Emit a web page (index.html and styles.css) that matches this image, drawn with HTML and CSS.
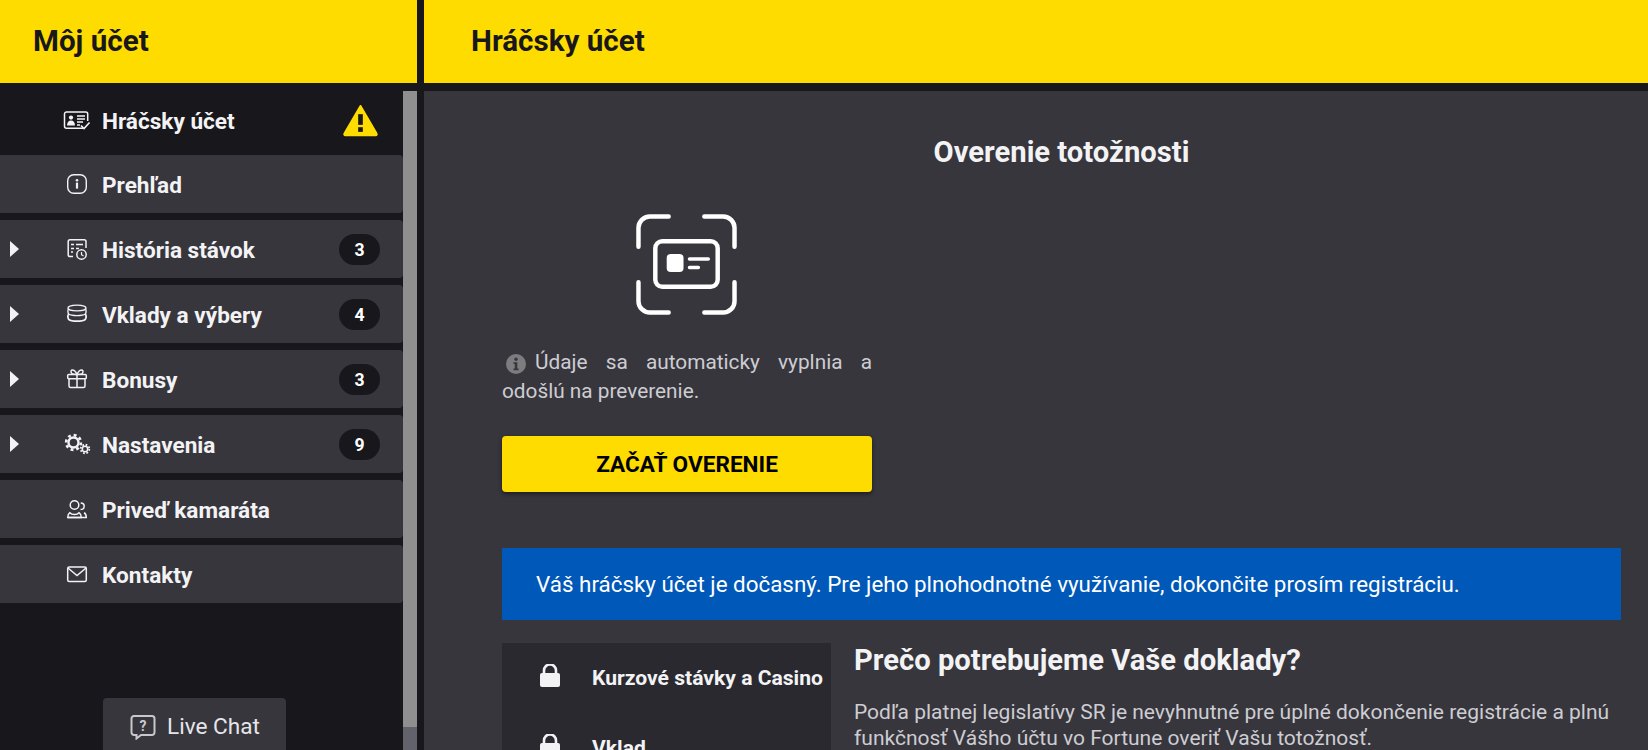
FILE: index.html
```html
<!DOCTYPE html>
<html lang="sk">
<head>
<meta charset="utf-8">
<title>Môj účet</title>
<link rel="stylesheet" href="styles.css">
</head>
<body>
<div class="app">
  <aside class="side">
    <header class="bar bar-left"><h1 class="bar-title">Môj účet</h1></header>
    <div class="side-body">
      <div class="side-main">
        <nav class="menu">
          <a class="item item-active">
            <span class="arrow-cell"></span>
            <svg class="ico" viewBox="0 0 28 24" fill="none" stroke="currentColor" stroke-width="1.5"><path d="M20 20.2H3.5a2 2 0 0 1-2-2V6a2 2 0 0 1 2-2h19.2a2 2 0 0 1 2 2v7"/><circle cx="8" cy="9.6" r="2.1" fill="currentColor" stroke="none"/><path d="M4 17.6c.2-3.6 1.6-5.2 4-5.2s3.800 1.600 4 5.200z" fill="currentColor" stroke="none"/><path d="M14 8h8M14 11h8M14 14h6M14 17h3"/><path d="M18 17.500l3 3 5.500-6" stroke-width="1.600"/></svg>
            <span class="label">Hráčsky účet</span>
            <svg class="warn" viewBox="0 0 36 34"><path d="M18 2.500 34.500 31a1 1 0 0 1-.9 1.600H2.400a1 1 0 0 1-.9-1.600z" fill="#ffdc00" stroke="#ffdc00" stroke-width="2" stroke-linejoin="round"/><rect x="15.600" y="11" width="4.800" height="11" fill="#18171c"/><rect x="15.600" y="24.400" width="4.800" height="4.800" fill="#18171c"/></svg>
          </a>
          <a class="item">
            <span class="arrow-cell"></span>
            <svg class="ico" viewBox="0 0 28 24" fill="none" stroke="currentColor" stroke-width="1.400"><rect x="4.700" y="2.700" width="18.600" height="18.600" rx="6"/><circle cx="14" cy="8.300" r="1.300" fill="currentColor" stroke="none"/><rect x="12.900" y="10.600" width="2.200" height="6" fill="currentColor" stroke="none"/></svg>
            <span class="label">Prehľad</span>
          </a>
          <a class="item">
            <span class="arrow-cell"><span class="arrow"></span></span>
            <svg class="ico" viewBox="0 0 28 24" fill="none" stroke="currentColor" stroke-width="1.500"><path d="M10 19.500H7a1.800 1.800 0 0 1-1.800-1.800V4.600A1.800 1.800 0 0 1 7 2.800h14.200A1.800 1.800 0 0 1 23 4.600V11"/><path d="M8 7.500h3M13 7.500h7M8 11.500h3M13 11.500h3M8 15h2"/><circle cx="18.500" cy="17.500" r="4.700"/><path d="M18.500 15v2.700l2 1.200" stroke-width="1.200"/></svg>
            <span class="label">História stávok</span>
            <span class="badge">3</span>
          </a>
          <a class="item">
            <span class="arrow-cell"><span class="arrow"></span></span>
            <svg class="ico" viewBox="0 0 28 24" fill="none" stroke="currentColor" stroke-width="1.400"><ellipse cx="14" cy="6" rx="9" ry="2.900"/><path d="M5.500 7c-.8 1.100-.8 3.800.2 5 1.400 1.100 5 1.600 8.300 1.600s6.900-.5 8.300-1.600c1-1.200 1-3.900.2-5"/><path d="M5.700 12c-1.100 1.200-1.100 4 0 5.300 1.500 1.400 5 1.900 8.300 1.900s6.800-.5 8.300-1.900c1.100-1.300 1.100-4.100 0-5.300" stroke-width="1.800"/></svg>
            <span class="label">Vklady a výbery</span>
            <span class="badge">4</span>
          </a>
          <a class="item">
            <span class="arrow-cell"><span class="arrow"></span></span>
            <svg class="ico" viewBox="0 0 28 24" fill="none" stroke="currentColor" stroke-width="1.500"><rect x="4.700" y="7.500" width="18.600" height="4.200" rx="1"/><path d="M6 11.700V19a1.500 1.500 0 0 0 1.500 1.500h13A1.500 1.500 0 0 0 22 19v-7.300M14 7.500v13"/><path d="M14 7.500c-1.500-3.500-3-4.500-4.500-4.500S7.500 4.500 8.500 6.200c.6 1 2.500 1.300 5.500 1.300zM14 7.500c1.500-3.500 3-4.500 4.500-4.500s2 1.500 1 3.200c-.6 1-2.500 1.300-5.500 1.300z"/></svg>
            <span class="label">Bonusy</span>
            <span class="badge">3</span>
          </a>
          <a class="item">
            <span class="arrow-cell"><span class="arrow"></span></span>
            <svg class="ico" viewBox="0 0 28 24" fill="none" stroke="currentColor"><circle cx="10.500" cy="10.500" r="5" stroke-width="2.400"/><circle cx="10.500" cy="10.500" r="7.400" stroke-width="2.600" stroke-dasharray="2.900 2.900"/><circle cx="22" cy="17" r="2.700" stroke-width="1.500"/><circle cx="22" cy="17" r="4.300" stroke-width="1.800" stroke-dasharray="1.700 1.700"/></svg>
            <span class="label">Nastavenia</span>
            <span class="badge">9</span>
          </a>
          <a class="item">
            <span class="arrow-cell"></span>
            <svg class="ico" viewBox="0 0 28 24" fill="none" stroke="currentColor" stroke-width="1.500"><circle cx="11.500" cy="8" r="4.300"/><path d="M4.700 20.500c0-2.500 1-4 2.200-4.800 1 1.300 2.500 1.800 4.600 1.800s3.500-.5 4.500-1.800c1.300.8 2.300 2.300 2.300 4.800z"/><path d="M4.700 20.500h18.600c0-2.500-.8-4-2.300-4.700M17.500 12.500c2.200 0 3.700-1.300 3.700-3.300s-1.500-3.300-3.500-3.300"/></svg>
            <span class="label">Priveď kamaráta</span>
          </a>
          <a class="item">
            <span class="arrow-cell"></span>
            <svg class="ico" viewBox="0 0 28 24" fill="none" stroke="currentColor" stroke-width="1.500"><rect x="4.700" y="5" width="18.600" height="14.500" rx="1.500"/><path d="M5 6l9 7.500L23 6"/></svg>
            <span class="label">Kontakty</span>
          </a>
        </nav>
        <div class="chat">
          <svg class="chat-ico" viewBox="0 0 26 26" fill="none" stroke="#c8c8cc" stroke-width="2"><path d="M4 2h18a2.500 2.500 0 0 1 2.500 2.500v14A2.500 2.500 0 0 1 22 21H11l-4.500 3.500V21H4a2.500 2.500 0 0 1-2.500-2.500v-14A2.500 2.500 0 0 1 4 2z"/><text x="13" y="16.500" class="chat-q">?</text></svg>
          <span class="chat-label">Live Chat</span>
        </div>
      </div>
      <div class="scroll"><div class="scroll-thumb"></div></div>
    </div>
  </aside>
  <main class="content">
    <header class="bar bar-right"><h1 class="bar-title">Hráčsky účet</h1></header>
    <section class="panel">
      <h2 class="verify-title">Overenie totožnosti</h2>
      <div class="verify">
        <svg class="scan" viewBox="0 0 102 102" fill="none" stroke="#fff" stroke-width="4.500" stroke-linecap="round" stroke-linejoin="round"><path d="M2.500 33V14A11.500 11.500 0 0 1 14 2.500h19M69 2.500h19A11.500 11.500 0 0 1 99.500 14v19M2.500 69v19A11.500 11.500 0 0 0 14 99.500h19M69 99.500h19A11.500 11.500 0 0 0 99.500 88V69"/><rect x="19.500" y="27.500" width="63" height="46" rx="7"/><rect x="31" y="40.500" width="17" height="18" rx="4" fill="#fff" stroke="none"/><path d="M54 45.500h19M54 54h9" stroke-width="3.500"/></svg>
        <p class="verify-text"><svg class="info" viewBox="0 0 20 20"><circle cx="10" cy="10" r="10" fill="#7d7d80"/><circle cx="10" cy="5.300" r="1.700" fill="#37363d"/><path d="M7.500 8.300h3.800v6.300h1.300v1.600H7.500v-1.600h1.300V9.900H7.500z" fill="#37363d"/></svg>Údaje sa automaticky vyplnia a odošlú na preverenie.</p>
        <button class="cta">ZAČAŤ OVERENIE</button>
      </div>
      <div class="notice">Váš hráčsky účet je dočasný. Pre jeho plnohodnotné využívanie, dokončite prosím registráciu.</div>
      <div class="details">
        <ul class="locks">
          <li class="lock-row"><svg class="lock" viewBox="0 0 20 23"><path d="M4 10V6.500a6 6 0 0 1 12 0V10" fill="none" stroke="#f2f2f4" stroke-width="2.600"/><rect y="9" width="20" height="14" rx="2" fill="#f2f2f4"/></svg><span class="lock-label">Kurzové stávky a Casino</span></li>
          <li class="lock-row"><svg class="lock" viewBox="0 0 20 23"><path d="M4 10V6.500a6 6 0 0 1 12 0V10" fill="none" stroke="#f2f2f4" stroke-width="2.600"/><rect y="9" width="20" height="14" rx="2" fill="#f2f2f4"/></svg><span class="lock-label">Vklad</span></li>
        </ul>
        <div class="why">
          <h3 class="why-title">Prečo potrebujeme Vaše doklady?</h3>
          <p class="why-text">Podľa platnej legislatívy SR je nevyhnutné pre úplné dokončenie registrácie a plnú funkčnosť Vášho účtu vo Fortune overiť Vašu totožnosť.</p>
        </div>
      </div>
    </section>
  </main>
</div>
</body>
</html>
```

FILE: styles.css
```css
* { box-sizing: border-box; }
html, body { margin: 0; height: 100%; overflow: hidden; }
body { background: #18171c; font-family: Roboto, "Liberation Sans", sans-serif; color: #f3f3f5; }
.app { display: grid; grid-template-columns: 417px 1fr; column-gap: 7px; height: 750px; overflow: hidden; }
.side, .content { display: flex; flex-direction: column; min-width: 0; height: 750px; }
.bar { height: 83px; flex: none; background: #ffdc00; display: flex; align-items: center; margin-bottom: 8px; padding-bottom: 2px; }
.bar-left { padding-left: 33px; }
.bar-right { padding-left: 47px; }
.bar-title { margin: 0; font-size: 29.6px; line-height: 34px; font-weight: 700; color: #18171c; }

.side-body { flex: 1; display: flex; min-height: 0; }
.side-main { width: 403px; flex: none; display: flex; flex-direction: column; }
.menu { display: flex; flex-direction: column; gap: 7px; }
.item { height: 58px; display: flex; align-items: center; padding: 0 23px 0 10px; background: #37363d; border-radius: 0 4px 4px 0; font-size: 22.6px; line-height: 30px; font-weight: 700; color: #f3f3f5; }
.label { flex: 1; padding-top: 3px; }
.item-active { background: #18171c; height: 57px; padding-right: 25px; }
.item-active .label { padding-top: 4px; }
.arrow-cell { width: 9px; flex: none; display: flex; }
.arrow { width: 0; height: 0; border-left: 9px solid #f3f3f5; border-top: 8px solid transparent; border-bottom: 8px solid transparent; }
.ico { width: 28px; height: 24px; flex: none; margin-left: 44px; margin-right: 11px; }
.badge { width: 41px; height: 31px; border-radius: 16px; background: #18171c; color: #fff; font-size: 17.6px; line-height: 20px; font-weight: 700; display: flex; align-items: center; justify-content: center; padding-top: 1px; }
.warn { width: 35px; height: 34px; flex: none; }

.chat { margin: 95px 0 0 103px; width: 183px; height: 60px; background: #37363d; border-radius: 4px 4px 0 0; display: flex; align-items: flex-start; padding: 16px 0 0 27px; gap: 11px; font-size: 22.6px; line-height: 24px; color: #e6e6ea; flex: none; }
.chat-label { margin-top: 1px; }
.chat-ico { width: 26px; height: 26px; flex: none; }
.chat-q { font-size: 14px; font-weight: 700; fill: #c8c8cc; stroke: none; text-anchor: middle; font-family: Roboto, sans-serif; }

.scroll { width: 14px; flex: none; background: #62626c; }
.scroll-thumb { height: 636px; background: #8f8f8f; }

.panel { flex: 1; min-height: 0; overflow: hidden; background: #37363d; padding: 44px 27px 0 78px; }
.verify-title { margin: 0; text-align: center; font-size: 29.2px; line-height: 34px; font-weight: 700; color: #f3f3f5; }
.verify { width: 370px; margin-top: 45px; display: flex; flex-direction: column; align-items: center; }
.scan { width: 101px; height: 101px; flex: none; margin-right: 1px; }
.verify-text { margin: 33px 0 0; width: 100%; font-size: 20.8px; line-height: 29px; text-align: justify; color: #cdcdd2; }
.info { width: 20px; height: 20px; margin: 0 9px 0 4px; vertical-align: -5px; }
.cta { margin-top: 30px; width: 100%; height: 56px; border: 0; border-radius: 4px; background: #ffdc00; color: #000; font: 700 22.6px Roboto, sans-serif; box-shadow: 0 2px 4px rgba(0,0,0,.5); }

.notice { margin-top: 56px; height: 72px; background: #0058b8; color: #fff; font-size: 22.4px; display: flex; align-items: center; padding-left: 34px; }
.details { display: flex; margin-top: 23px; }
.locks { list-style: none; margin: 0; width: 329px; flex: none; background: #2a292f; display: flex; flex-direction: column; padding: 21px 0 0 38px; gap: 44px; height: 200px; }
.lock-row { display: flex; align-items: flex-start; gap: 32px; font-size: 21.1px; line-height: 24px; font-weight: 700; color: #f3f3f5; }
.lock-label { margin-top: 2px; }
.lock { width: 20px; height: 23px; flex: none; }
.why { margin-left: 23px; flex: 1; }
.why-title { margin: 0; font-size: 29.2px; line-height: 34px; font-weight: 700; color: #f3f3f5; }
.why-text { margin: 22px 0 0; font-size: 21px; line-height: 26px; color: #cdcdd2; }
```
